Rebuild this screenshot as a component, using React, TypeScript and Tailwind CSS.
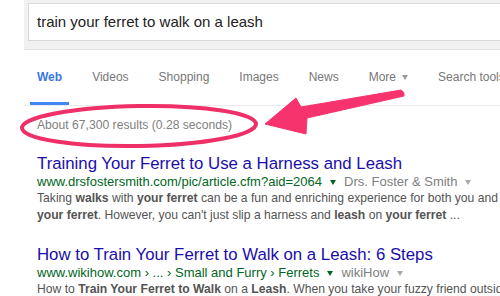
import React from 'react'

const tabs = ['Web', 'Videos', 'Shopping', 'Images', 'News']

const Caret = ({ color }: { color: string }) => (
  <span
    className="inline-block w-0 h-0 border-x-[3.5px] border-x-transparent border-t-[5px] align-middle"
    style={{ borderTopColor: color }}
  />
)

const App = () => {
  return (
    <div className="relative w-[500px] h-[296px] overflow-hidden bg-white font-['Liberation_Sans',Arial,sans-serif] whitespace-nowrap">
      {/* search header */}
      <div className="ml-6 h-[50px] bg-[#f1f1f1] border-b border-[#e2e2e2] pt-[3px] pl-1">
        <div className="h-[38px] bg-white border border-[#d9d9d9] border-r-0 flex items-center pl-2 text-[15px] text-[#222]">
          train your ferret to walk on a leash
        </div>
      </div>

      {/* tabs */}
      <div className="ml-6 pl-[6px] h-[56px] border-b border-[#ebebeb] flex gap-4 items-end text-[12px] text-[#777]">
        {tabs.map((t) => (
          <div
            key={t}
            className={
              t === 'Web'
                ? 'px-[7px] h-[36px] leading-[16px] border-b-[3px] border-[#4285f4] text-[#3b78e7] font-bold'
                : 'px-[7px] h-[36px] leading-[16px]'
            }
          >
            {t}
          </div>
        ))}
        <div className="px-[7px] h-[36px] flex items-start gap-[6px]">
          <span className="leading-[16px]">More</span>
          <span className="h-[16px] flex items-center">
            <Caret color="#999" />
          </span>
        </div>
        <div className="px-[7px] h-[36px] leading-[16px]">Search tools</div>
      </div>

      <div className="pl-[37px]">
        <div className="mt-[12px] leading-[15px] text-[12.15px] text-[#808080]">
          About 67,300 results (0.28 seconds)
        </div>

        {/* result 1 */}
        <div className="mt-[21px] leading-[20px] text-[16.8px] text-[#1a0dab]">
          Training Your Ferret to Use a Harness and Leash
        </div>
        <div className="leading-[16px] text-[13px] text-[#006621] flex items-center">
          www.drsfostersmith.com/pic/article.cfm?aid=2064
          <span className="mx-[8px] flex">
            <Caret color="#006621" />
          </span>
          <span className="text-[#808080]">Drs. Foster &amp; Smith</span>
          <span className="ml-[8px] flex">
            <Caret color="#aaa" />
          </span>
        </div>
        <div className="leading-[17px] text-[12.15px] text-[#545454]">
          <div>
            Taking <b>walks</b> with <b>your ferret</b> can be a fun and enriching experience for both you and
          </div>
          <div>
            <b>your ferret</b>. However, you can't just slip a harness and <b>leash</b> on <b>your ferret</b> ...
          </div>
        </div>

        {/* result 2 */}
        <div className="mt-[21px] leading-[20px] text-[16.8px] text-[#1a0dab]">
          How to Train Your Ferret to Walk on a Leash: 6 Steps
        </div>
        <div className="leading-[16px] text-[13px] text-[#006621] flex items-center">
          www.wikihow.com › ... › Small and Furry › Ferrets
          <span className="mx-[8px] flex">
            <Caret color="#006621" />
          </span>
          <span className="text-[#808080]">wikiHow</span>
          <span className="ml-[8px] flex">
            <Caret color="#aaa" />
          </span>
        </div>
        <div className="leading-[17px] text-[12.15px] text-[#545454]">
          How to <b>Train Your Ferret to Walk</b> on a <b>Leash</b>. When you take your fuzzy friend outside
        </div>
      </div>

      {/* annotation overlay */}
      <svg
        className="absolute inset-0 pointer-events-none"
        width="500"
        height="296"
        viewBox="0 0 500 296"
      >
        <ellipse
          cx="139"
          cy="126"
          rx="117"
          ry="20"
          transform="rotate(-1 139 126)"
          fill="none"
          stroke="#ef2f68"
          strokeWidth="4"
        />
        <path
          d="M265 124 L296 98 L301 107 L401 90 Q405 92 404 96 L307 118 L306 134 Z"
          fill="#f7336d"
          stroke="#f7336d"
          strokeWidth="1"
          strokeLinejoin="round"
        />
      </svg>
    </div>
  )
}

export default App
